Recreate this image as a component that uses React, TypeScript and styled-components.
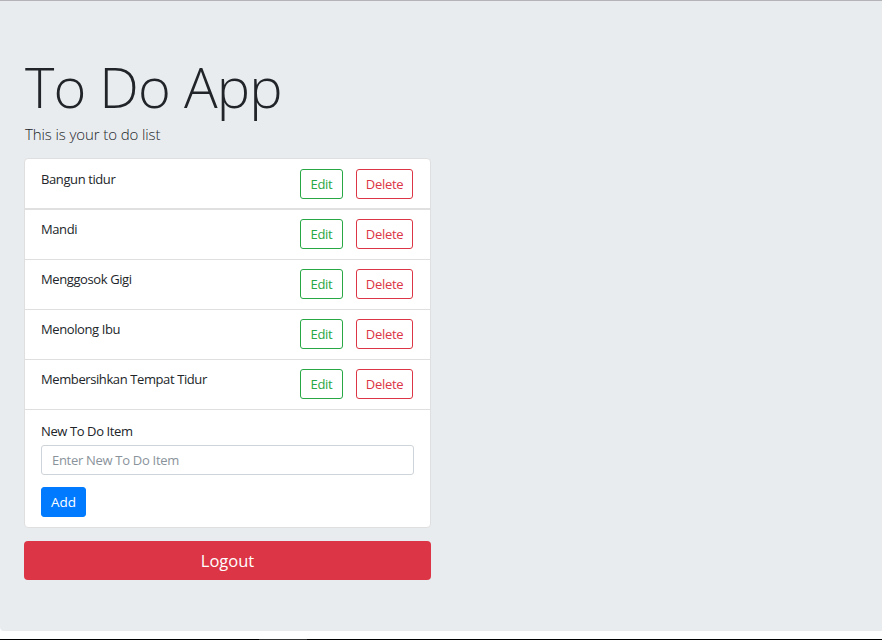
import React from "react";
import styled, { createGlobalStyle } from "styled-components";

const Global = createGlobalStyle`
  html, body { margin: 0; padding: 0; background: #fff; }
  body { font-family: "Open Sans", "Noto Sans", sans-serif; color: #212529; }
  * { box-sizing: border-box; }
`;

const TopLine = styled.div`
  height: 1px;
  background: #b4b4b8;
`;

const Jumbotron = styled.section`
  background: #e9ecef;
  height: 630px;
  padding: 52px 0 0 24px;
  border-radius: 0 0 0 4px;
`;

const Title = styled.h1`
  margin: 0 0 0 1px;
  font-size: 56px;
  font-weight: 300;
  line-height: 67px;
  letter-spacing: -0.8px;
  color: #212529;
`;

const Lead = styled.p`
  margin: 2px 0 12px 1px;
  font-size: 15px;
  font-weight: 300;
  line-height: 24px;
  letter-spacing: -0.1px;
  color: #212529;
`;

const Card = styled.div`
  width: 407px;
  background: #fff;
  border: 1px solid #dfdfdf;
  border-radius: 4px;
`;

const Row = styled.div<{ $first?: boolean }>`
  display: flex;
  align-items: flex-start;
  justify-content: space-between;
  padding: ${(p) => (p.$first ? "10px 17px 9px 16px" : "9px 17px 10px 16px")};
  border-bottom: ${(p) => (p.$first ? "2px solid #e0e0e0" : "1px solid #dfdfdf")};
`;

const ItemText = styled.span`
  font-size: 13px;
  line-height: 20px;
  letter-spacing: -0.4px;
  color: #212529;
`;

const Actions = styled.div`
  display: flex;
  gap: 13px;
`;

const OutlineBtn = styled.button<{ $color: string; $w: number }>`
  width: ${(p) => p.$w}px;
  height: 30px;
  padding: 0;
  font-family: inherit;
  font-size: 13px;
  letter-spacing: -0.3px;
  line-height: 28px;
  color: ${(p) => p.$color};
  background: transparent;
  border: 1px solid ${(p) => p.$color};
  border-radius: 3px;
`;

const Form = styled.div`
  padding: 11px 16px 10px 16px;
  display: flex;
  flex-direction: column;
  align-items: flex-start;
`;

const Label = styled.label`
  font-size: 13px;
  line-height: 20px;
  letter-spacing: -0.4px;
  color: #212529;
  margin-bottom: 4px;
`;

const Input = styled.input`
  width: 373px;
  height: 30px;
  padding: 0 10px;
  font-family: inherit;
  font-size: 13px;
  letter-spacing: -0.3px;
  border: 1px solid #ced4da;
  border-radius: 3px;
  margin-bottom: 12px;
  &::placeholder { color: #8a939b; }
`;

const AddBtn = styled.button`
  width: 45px;
  height: 30px;
  padding: 0;
  font-family: inherit;
  font-size: 13.5px;
  color: #fff;
  background: #007bff;
  border: 1px solid #007bff;
  border-radius: 3px;
`;

const Logout = styled.button`
  display: block;
  width: 407px;
  height: 39px;
  margin-top: 13px;
  font-family: inherit;
  font-size: 16.5px;
  color: #fff;
  background: #dc3545;
  border: none;
  border-radius: 4px;
`;

const BottomGap = styled.div`
  height: 8px;
  background: #fff;
`;

const Taskbar = styled.div`
  height: 1px;
  background: #000;
  display: flex;
`;

const TaskSeg = styled.div`
  margin-left: 259px;
  width: 48px;
  background: #333;
`;

const items = [
  "Bangun tidur",
  "Mandi",
  "Menggosok Gigi",
  "Menolong Ibu",
  "Membersihkan Tempat Tidur",
];

export default function App() {
  return (
    <>
      <Global />
      <TopLine />
      <Jumbotron>
        <Title>To Do App</Title>
        <Lead>This is your to do list</Lead>
        <Card>
          {items.map((t, i) => (
            <Row key={t} $first={i === 0}>
              <ItemText>{t}</ItemText>
              <Actions>
                <OutlineBtn $color="#28a745" $w={43}>Edit</OutlineBtn>
                <OutlineBtn $color="#dc3545" $w={57}>Delete</OutlineBtn>
              </Actions>
            </Row>
          ))}
          <Form>
            <Label>New To Do Item</Label>
            <Input placeholder="Enter New To Do Item" />
            <AddBtn>Add</AddBtn>
          </Form>
        </Card>
        <Logout>Logout</Logout>
      </Jumbotron>
      <BottomGap />
      <Taskbar>
        <TaskSeg />
      </Taskbar>
    </>
  );
}
